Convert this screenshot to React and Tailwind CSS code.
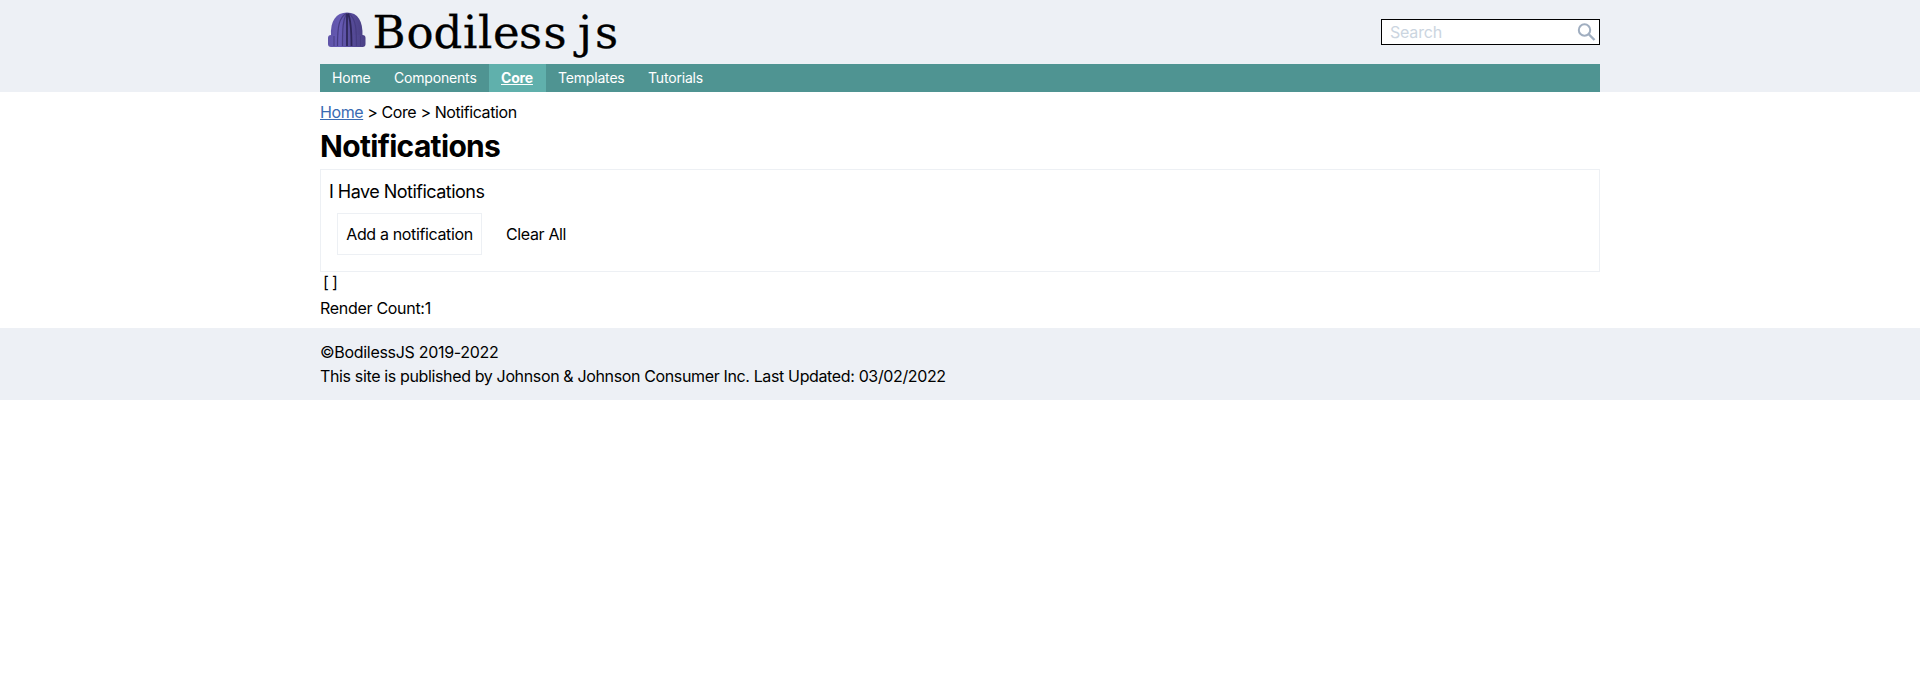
const navItems = [
  { label: 'Home', cls: 'w-[62px]' },
  { label: 'Components', cls: 'w-[107px]' },
  { label: 'Core', cls: 'w-[57px] bg-[#60b0ac] font-bold underline' },
  { label: 'Templates', cls: 'w-[90px]' },
  { label: 'Tutorials', cls: 'w-[79px]' },
];

function Logo() {
  return (
    <svg width="300" height="64" viewBox="0 0 300 64" className="block" role="img" aria-label="Bodiless js">
      <defs>
        <linearGradient id="knit" x1="0" x2="1">
          <stop offset="0" stopColor="#5f54a8" />
          <stop offset="0.3" stopColor="#675bb5" />
          <stop offset="0.6" stopColor="#584d9c" />
          <stop offset="1" stopColor="#4a4085" />
        </linearGradient>
      </defs>
      <path d="M11 36C10 21 16 12.500 27 12.500S43 21 42.500 36Z" fill="url(#knit)" />
      <rect x="8" y="35" width="37.500" height="12" rx="3" fill="url(#knit)" />
      <path d="M26 13.500C19 18 17.500 26 17.500 46M26.500 13.500C23 20 22.500 28 22.500 46M29 13.500C36 19 36.500 29 36.500 46" fill="none" stroke="#463c82" strokeWidth="1.200" />
      <path d="M27 13.500V46M28 13.500C31 20 31.500 29 31.500 46" fill="none" stroke="#2e2659" strokeWidth="1.800" />
      <path d="M14 36V46M40.500 36V46" stroke="#463c82" strokeWidth="1" />
      <g fontFamily="'DejaVu Serif', serif" fontSize="45" fill="#000" stroke="#000" strokeWidth="0.3">
        <text x="52.5 86.5 113.5 143 158 173 199 223.5" y="47.500">Bodiless</text>
        <text x="258 275" y="47.500">js</text>
      </g>
    </svg>
  );
}

export default function App() {
  return (
    <div className="font-['Inter',sans-serif] text-base leading-6 tracking-[-0.36px] text-black">
      <header className="h-[92px] bg-[#edf0f5]">
        <div className="mx-auto w-[1280px]">
          <div className="flex h-16 items-center justify-between">
            <Logo />
            <div className="flex h-[26px] w-[219px] items-center justify-between border border-black bg-white pr-[3px] pl-2">
              <span className="tracking-[-0.2px] text-[#cbd5e0]">Search</span>
              <svg width="19" height="19" viewBox="0 0 19 19" fill="none" stroke="#a0aec0" strokeWidth="2">
                <circle cx="7.500" cy="7" r="5.700" />
                <path d="M11.500 11L17.500 17" strokeWidth="2.400" />
              </svg>
            </div>
          </div>
          <nav className="flex h-7 bg-[#4f9492] text-sm leading-7 tracking-[-0.18px] text-white">
            {navItems.map((item) => (
              <a key={item.label} className={`${item.cls} pl-3 whitespace-nowrap`}>{item.label}</a>
            ))}
          </nav>
        </div>
      </header>
      <main className="mx-auto w-[1280px] pt-2">
        <div className="tracking-[-0.41px]"><a className="text-[#3a6ab2] underline">Home</a> &gt; Core &gt; Notification</div>
        <h1 className="flex h-[45px] items-center pb-px text-3xl font-bold tracking-[-0.68px]">Notifications</h1>
        <section className="h-[103px] border border-[#edf0f4] px-2 pt-2">
          <h2 className="text-lg leading-7 tracking-[-0.52px]">I Have Notifications</h2>
          <div className="mt-[7px] flex pl-2">
            <button className="h-[42px] w-[145px] border border-[#edf0f4] whitespace-nowrap">Add a notification</button>
            <button className="ml-6">Clear All</button>
          </div>
        </section>
        <pre className="-mt-0.5 mb-0.5 pl-[3px] font-['Inter',sans-serif] leading-6 tracking-[-0.7px]">[ ]</pre>
        <div className="tracking-[-0.3px]">Render Count:1</div>
      </main>
      <footer className="mt-2 h-[72px] bg-[#edf0f5] pt-3">
        <div className="mx-auto w-[1280px]">
          <p className="tracking-[-0.3px]">©BodilessJS 2019-2022</p>
          <p>This site is published by Johnson &amp; Johnson Consumer Inc. Last Updated: 03/02/2022</p>
        </div>
      </footer>
    </div>
  );
}
